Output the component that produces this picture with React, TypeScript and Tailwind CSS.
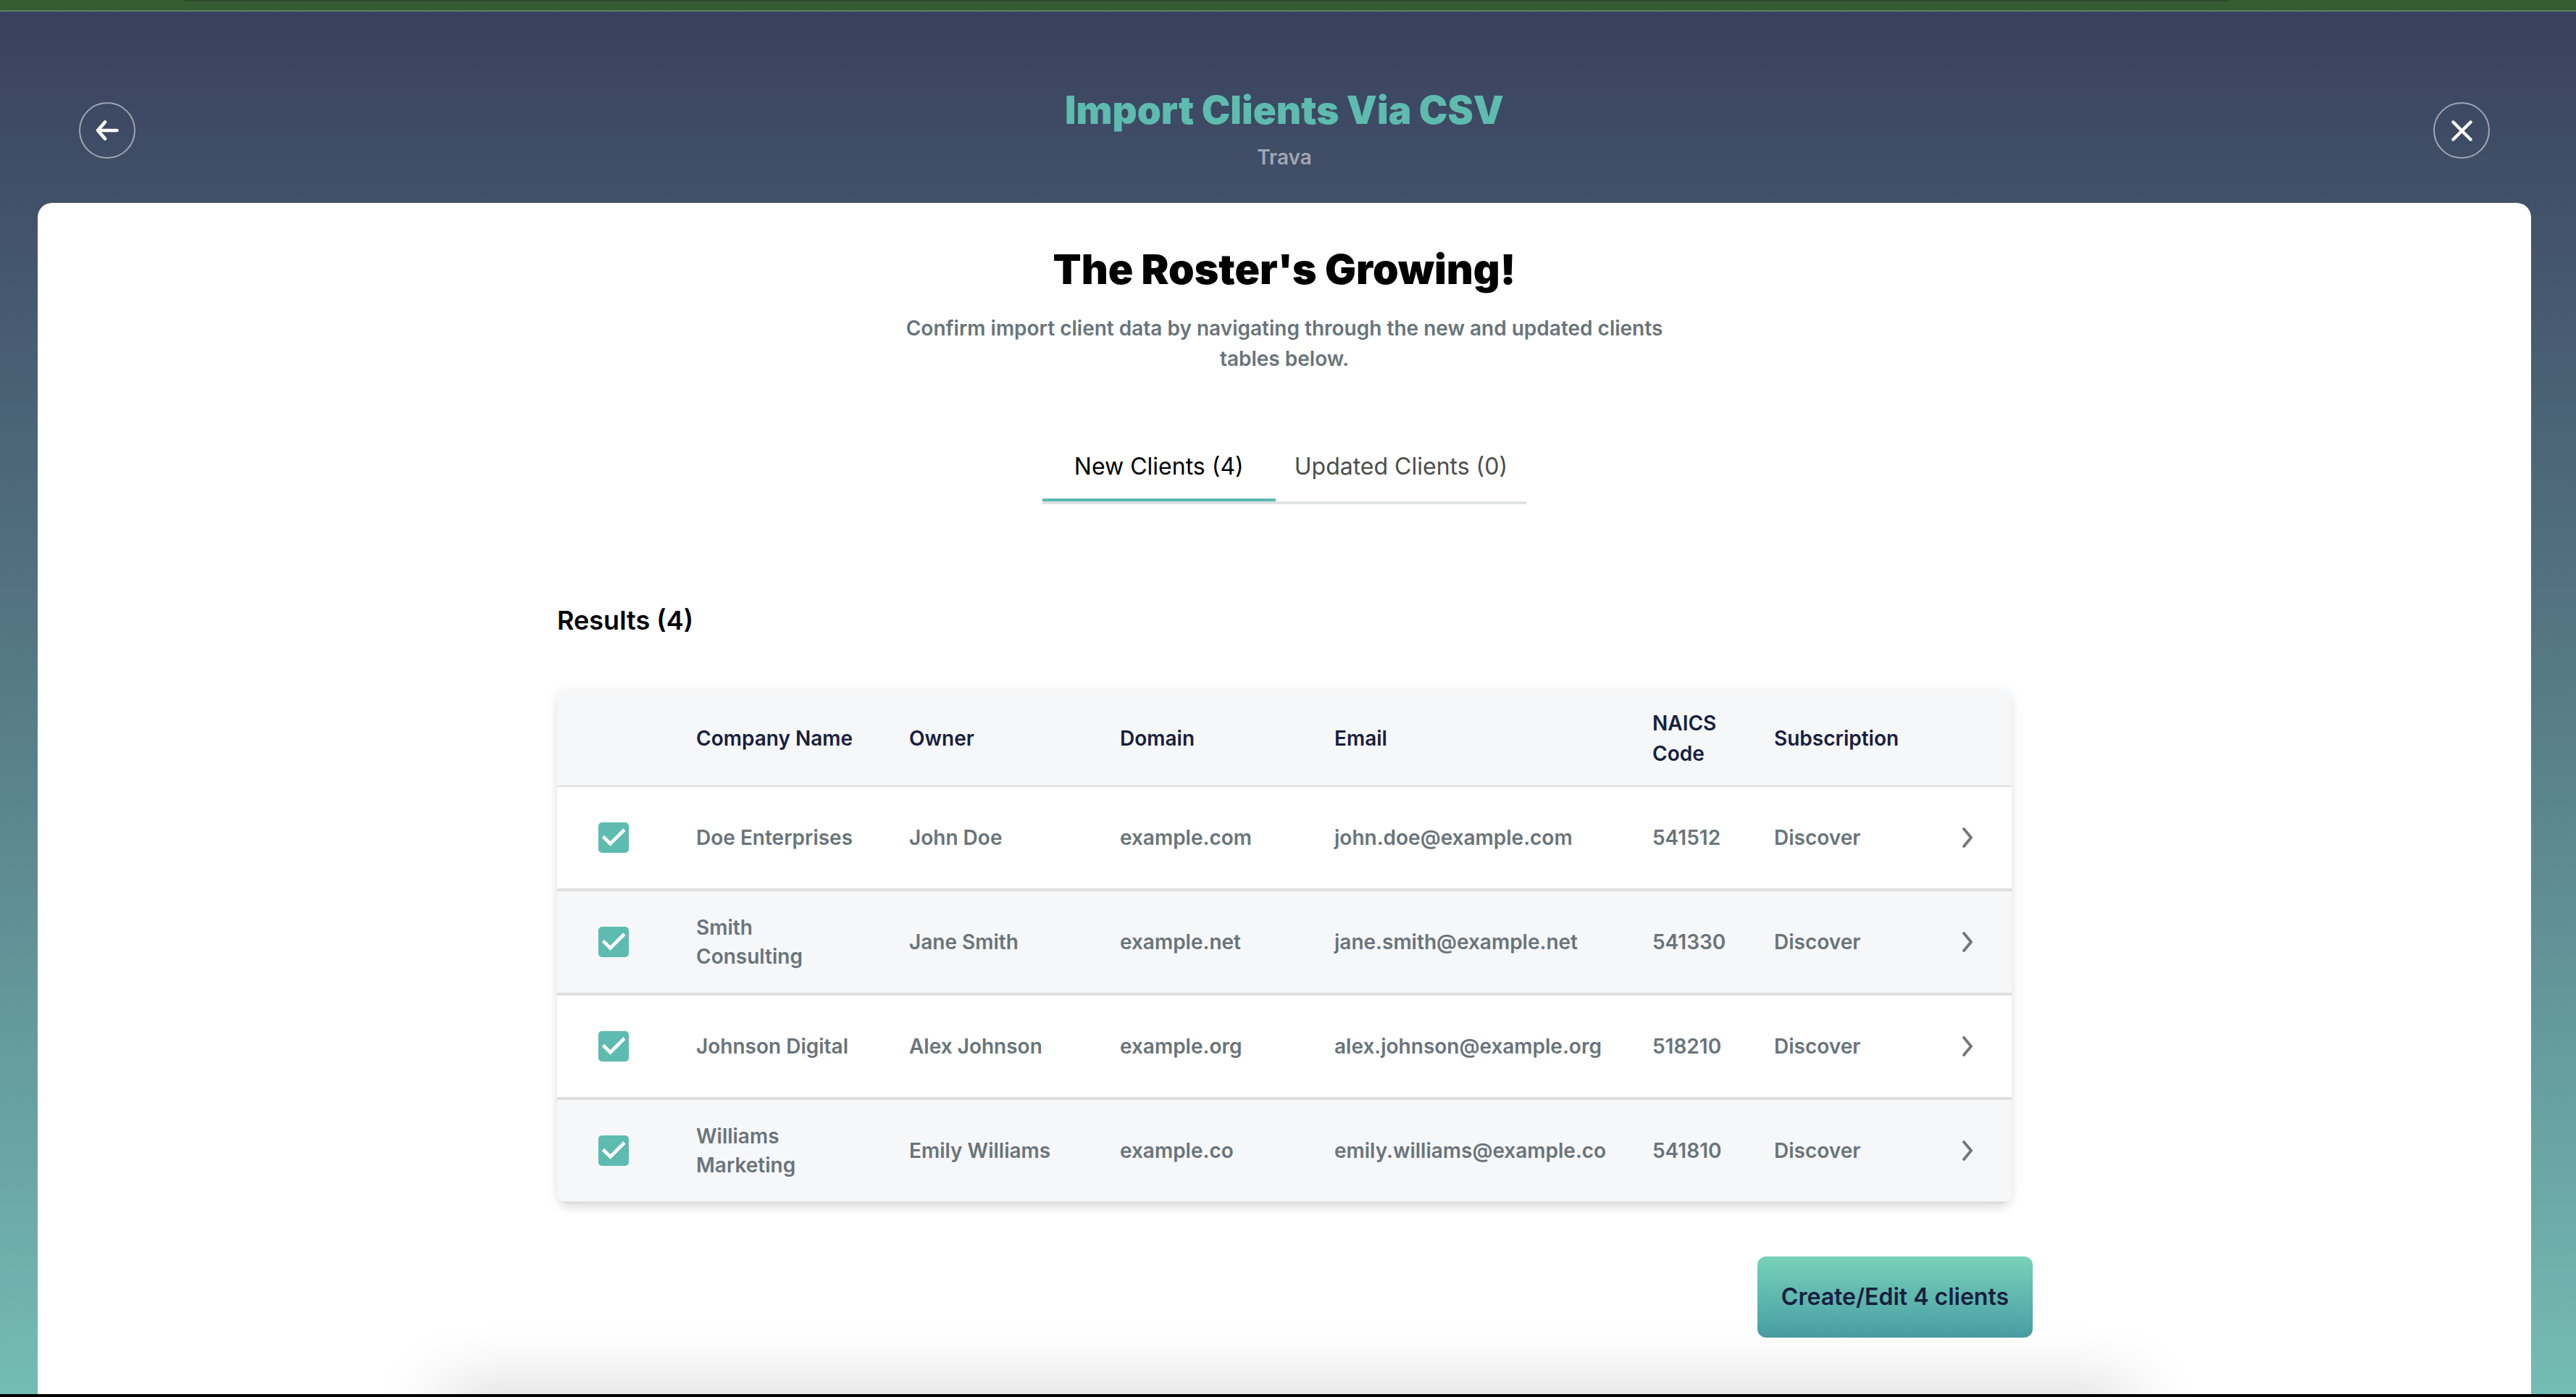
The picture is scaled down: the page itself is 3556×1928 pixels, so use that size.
import { useState } from "react";

type Client = {
  company: string;
  owner: string;
  domain: string;
  email: string;
  naics: string;
  subscription: string;
};

const clients: Client[] = [
  { company: "Doe Enterprises", owner: "John Doe", domain: "example.com", email: "john.doe@example.com", naics: "541512", subscription: "Discover" },
  { company: "Smith Consulting", owner: "Jane Smith", domain: "example.net", email: "jane.smith@example.net", naics: "541330", subscription: "Discover" },
  { company: "Johnson Digital", owner: "Alex Johnson", domain: "example.org", email: "alex.johnson@example.org", naics: "518210", subscription: "Discover" },
  { company: "Williams Marketing", owner: "Emily Williams", domain: "example.co", email: "emily.williams@example.co", naics: "541810", subscription: "Discover" },
];

const roundButton =
  "flex size-[78px] shrink-0 items-center justify-center rounded-full border-2 border-white/50 text-white";

function Header() {
  return (
    <header className="flex items-center justify-between px-[109px] pt-[106px] pb-[42px]">
      <button type="button" aria-label="Back" className={roundButton}>
        <svg viewBox="0 0 32 28" className="h-7 w-8" fill="none" stroke="currentColor" strokeWidth="4.6" strokeLinecap="round" strokeLinejoin="round">
          <path d="M13 2.5 L3 14 L13 25.5 M3.5 14 H29.5" />
        </svg>
      </button>
      <div className="text-center">
        <h1 className="text-[53px] leading-[60px] font-black text-[#5ebbb0]">Import Clients Via CSV</h1>
        <p className="mt-3.5 text-[28px] leading-[42px] font-semibold text-[#a0a7b4]">Trava</p>
      </div>
      <button type="button" aria-label="Close" className={roundButton}>
        <svg viewBox="0 0 30 30" className="size-[30px]" fill="none" stroke="currentColor" strokeWidth="4.4" strokeLinecap="round">
          <path d="M3.5 3.5 L27.5 27.5 M27.5 3.5 L3.5 27.5" />
        </svg>
      </button>
    </header>
  );
}

function Tabs() {
  return (
    <div role="tablist" className="mt-20 flex border-b-4 border-[#dde1e4] text-[32px]">
      <button role="tab" type="button" aria-selected="true" className="h-24 border-b-4 border-[#5ebbb0] px-11 pt-1 text-black">
        New Clients (4)
      </button>
      <button role="tab" type="button" aria-selected="false" className="h-24 border-b-4 border-transparent px-[26px] pt-1 text-[#4d4d4d]">
        Updated Clients (0)
      </button>
    </div>
  );
}

function RowCheckbox({ label }: { label: string }) {
  const [checked, setChecked] = useState(true);
  return (
    <label className="relative ml-[57px] block size-[42px]">
      <input
        type="checkbox"
        aria-label={label}
        checked={checked}
        onChange={() => setChecked(!checked)}
        className="block size-[42px] appearance-none rounded-[5px] border-2 border-[#5ebbb0] checked:bg-[#5ebbb0]"
      />
      <svg viewBox="0 0 42 42" className="pointer-events-none absolute inset-0" fill="none" stroke="#fff" strokeWidth="4.6">
        <path d="M6.500 19.500 L16.500 29.500 L36 10" />
      </svg>
    </label>
  );
}

function ClientTable() {
  return (
    <div className="mt-[69px] w-full overflow-hidden rounded-2xl shadow-[0_6px_12px_rgba(0,0,0,0.08),0_0_20px_rgba(0,0,0,0.06)]">
      <table className="w-full table-fixed border-collapse text-left text-[28px]">
        <colgroup>
          <col className="w-[192px]" />
          <col className="w-[294px]" />
          <col className="w-[291px]" />
          <col className="w-[296px]" />
          <col className="w-[439px]" />
          <col className="w-[168px]" />
          <col className="w-[259px]" />
          <col />
        </colgroup>
        <thead>
          <tr className="h-[134px] bg-[#f6f7f9] leading-[42px] text-[#17203f] shadow-[inset_0_-2px_0_#dfdfdf]">
            <th />
            <th className="font-semibold">Company Name</th>
            <th className="font-semibold">Owner</th>
            <th className="font-semibold">Domain</th>
            <th className="font-semibold">Email</th>
            <th className="pr-16 font-semibold">NAICS Code</th>
            <th className="font-semibold">Subscription</th>
            <th />
          </tr>
        </thead>
        <tbody>
          {clients.map((client) => (
            <tr
              key={client.email}
              className="h-36 bg-white leading-10 font-semibold text-[#69747a] shadow-[inset_0_-4px_0_#dfdfdf] even:bg-[#f6f7f9]"
            >
              <td className="pb-1">
                <RowCheckbox label={`Select ${client.company}`} />
              </td>
              <td className="pr-16 pb-1">{client.company}</td>
              <td className="pb-1">{client.owner}</td>
              <td className="pb-1">{client.domain}</td>
              <td className="pb-1">{client.email}</td>
              <td className="pb-1">{client.naics}</td>
              <td className="pb-1">{client.subscription}</td>
              <td className="pb-1">
                <button type="button" aria-label={`Open ${client.company}`} className="block text-[#757575]">
                  <svg viewBox="0 0 16 28" className="h-7 w-4" fill="none" stroke="currentColor" strokeWidth="3.8" strokeLinecap="round" strokeLinejoin="round">
                    <path d="M3 2 L13 14 L3 26" />
                  </svg>
                </button>
              </td>
            </tr>
          ))}
        </tbody>
      </table>
    </div>
  );
}

export default function App() {
  return (
    <div className="relative flex min-h-screen flex-col overflow-hidden border-b-4 border-black bg-linear-to-b from-[#39405c] to-[#74bcb3] font-['Inter',sans-serif]">
      <div className="h-4 border-b-2 border-[#5f8462] bg-[#355b30]">
        <div className="mr-[480px] ml-[252px] h-[2px] rounded-b bg-[#2e472c]" />
      </div>
      <div className="flex flex-1 flex-col pr-[10px]">
        <Header />
        <main className="mx-[52px] flex flex-1 flex-col items-center rounded-t-[20px] bg-white px-10 pt-[52px] pb-[78px]">
          <h2 className="text-[57px] leading-[80px] font-black text-black">The Roster's Growing!</h2>
          <p className="mt-5 max-w-[1080px] text-center text-[28px] leading-[42px] font-semibold text-[#69747a]">
            Confirm import client data by navigating through the new and updated clients tables below.
          </p>
          <Tabs />
          <section className="mt-[133px] w-full max-w-[2008px]">
            <h3 className="text-[36px] leading-[54px] font-semibold text-black">Results (4)</h3>
            <ClientTable />
          </section>
          <div className="mt-[72px] flex w-full max-w-[2066px] justify-end">
            <button
              type="button"
              className="h-28 rounded-xl bg-linear-to-b from-[#78d2b9] to-[#489da3] px-[33px] text-[32px] font-semibold text-[#17203f]"
            >
              Create/Edit 4 clients
            </button>
          </div>
        </main>
      </div>
      <div className="pointer-events-none absolute inset-x-[610px] -bottom-10 h-10 shadow-[0_0_90px_rgba(0,0,0,0.26)]" />
    </div>
  );
}
